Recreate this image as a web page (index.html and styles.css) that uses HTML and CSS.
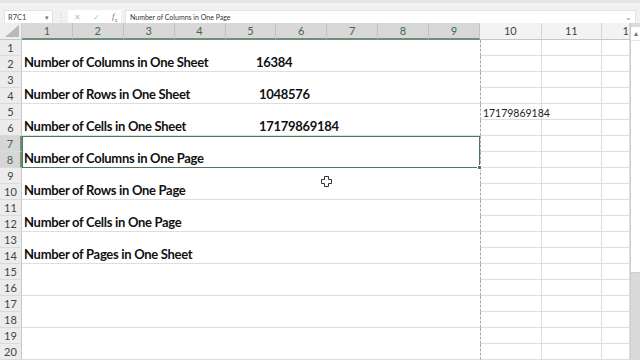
FILE: index.html
```html
<!DOCTYPE html>
<html lang="en">
<head>
    <meta charset="UTF-8">
    <title>Sheet - Rows, Columns and Cells</title>
    <link rel="stylesheet" href="styles.css">
</head>
<body>
    <div class="app">
        <div class="formula-bar">
            <div class="name-box">R7C1<span class="caret">▾</span></div>
            <div class="grip">⋮</div>
            <div class="fx-buttons">
                <span class="fx-btn">✕</span>
                <span class="fx-btn">✓</span>
                <span class="fx-btn fx"><i>f</i><sub>x</sub></span>
            </div>
            <div class="formula-input">Number of Columns in One Page<span class="chev">⌄</span></div>
        </div>

        <div class="sheet">
            <div class="grid">
                <div class="corner">
                    <svg width="14" height="12" viewBox="0 0 14 12"><polygon points="14,0 14,12 0,12" fill="#b9b9b9"/></svg>
                </div>
                <div class="col-head sel">1</div>
                <div class="col-head sel">2</div>
                <div class="col-head sel">3</div>
                <div class="col-head sel">4</div>
                <div class="col-head sel">5</div>
                <div class="col-head sel">6</div>
                <div class="col-head sel">7</div>
                <div class="col-head sel">8</div>
                <div class="col-head sel">9</div>
                <div class="col-head">10</div>
                <div class="col-head">11</div>
                <div class="col-head cut">1</div>

                <!-- rows 1-2 -->
                <div class="row-head">1</div>
                <div class="merged"><span class="label">Number of Columns in One Sheet</span><span class="value">16384</span></div>
                <div class="cell c10"></div><div class="cell"></div><div class="cell"></div>
                <div class="row-head">2</div>
                <div class="cell c10"></div><div class="cell"></div><div class="cell"></div>

                <!-- rows 3-4 -->
                <div class="row-head">3</div>
                <div class="merged"><span class="label">Number of Rows in One Sheet</span><span class="value shift">1048576</span></div>
                <div class="cell c10"></div><div class="cell"></div><div class="cell"></div>
                <div class="row-head">4</div>
                <div class="cell c10"></div><div class="cell"></div><div class="cell"></div>

                <!-- rows 5-6 -->
                <div class="row-head">5</div>
                <div class="merged"><span class="label">Number of Cells in One Sheet</span><span class="value shift">17179869184</span></div>
                <div class="cell c10 num">17179869184</div><div class="cell"></div><div class="cell"></div>
                <div class="row-head">6</div>
                <div class="cell c10"></div><div class="cell"></div><div class="cell"></div>

                <!-- rows 7-8 (selected) -->
                <div class="row-head sel">7</div>
                <div class="merged active"><span class="label">Number of Columns in One Page</span><span class="handle"></span></div>
                <div class="cell c10"></div><div class="cell"></div><div class="cell"></div>
                <div class="row-head sel">8</div>
                <div class="cell c10"></div><div class="cell"></div><div class="cell"></div>

                <!-- rows 9-10 -->
                <div class="row-head">9</div>
                <div class="merged"><span class="label">Number of Rows in One Page</span></div>
                <div class="cell c10"></div><div class="cell"></div><div class="cell"></div>
                <div class="row-head">10</div>
                <div class="cell c10"></div><div class="cell"></div><div class="cell"></div>

                <!-- rows 11-12 -->
                <div class="row-head">11</div>
                <div class="merged"><span class="label">Number of Cells in One Page</span></div>
                <div class="cell c10"></div><div class="cell"></div><div class="cell"></div>
                <div class="row-head">12</div>
                <div class="cell c10"></div><div class="cell"></div><div class="cell"></div>

                <!-- rows 13-14 -->
                <div class="row-head">13</div>
                <div class="merged"><span class="label">Number of Pages in One Sheet</span></div>
                <div class="cell c10"></div><div class="cell"></div><div class="cell"></div>
                <div class="row-head">14</div>
                <div class="cell c10"></div><div class="cell"></div><div class="cell"></div>

                <!-- rows 15-20 -->
                <div class="row-head">15</div>
                <div class="merged"></div>
                <div class="cell c10"></div><div class="cell"></div><div class="cell"></div>
                <div class="row-head">16</div>
                <div class="cell c10"></div><div class="cell"></div><div class="cell"></div>
                <div class="row-head">17</div>
                <div class="merged"></div>
                <div class="cell c10"></div><div class="cell"></div><div class="cell"></div>
                <div class="row-head">18</div>
                <div class="cell c10"></div><div class="cell"></div><div class="cell"></div>
                <div class="row-head">19</div>
                <div class="merged"></div>
                <div class="cell c10"></div><div class="cell"></div><div class="cell"></div>
                <div class="row-head">20</div>
                <div class="cell c10"></div><div class="cell"></div><div class="cell"></div>

                <!-- mouse pointer -->
                <svg class="pointer" width="11" height="11" viewBox="0 0 11 11">
                    <path d="M3.5 0.5h4v3h3v4h-3v3h-4v-3h-3v-4h3z" fill="#fff" stroke="#333" stroke-width="1"/>
                </svg>
            </div>

            <div class="scrollbar">
                <div class="arrow">▴</div>
                <div class="thumb"></div>
            </div>
        </div>
    </div>
</body>
</html>
```

FILE: styles.css
```css
* {
    box-sizing: border-box;
}

body {
    margin: 0;
    width: 640px;
    height: 360px;
    overflow: hidden;
    background: #fff;
    font-family: 'Lato', 'Liberation Sans', sans-serif;
}

.app {
    display: flex;
    flex-direction: column;
    height: 360px;
}

/* Formula bar */
.formula-bar {
    height: 23px;
    display: flex;
    align-items: flex-start;
    padding-top: 7px;
    background: #f1f1f1;
    border-top: 3px solid #e4e4e4;
    font-size: 7.5px;
    color: #444;
}

.name-box {
    width: 49px;
    height: 14px;
    margin-left: 4px;
    background: #fff;
    display: flex;
    align-items: center;
    justify-content: space-between;
    padding: 0 3px;
    border: 1px solid #e3e3e3;
}

.caret {
    font-size: 7px;
    color: #777;
}

.grip {
    width: 15px;
    text-align: center;
    color: #c4c4c4;
    font-size: 10px;
    line-height: 14px;
}

.fx-buttons {
    width: 53px;
    height: 14px;
    background: #fff;
    display: flex;
    align-items: center;
    gap: 12px;
    padding: 0 0 0 6px;
    color: #c0c0c0;
    font-size: 8px;
}

.fx-btn.fx {
    color: #777;
    font-family: 'Liberation Serif', serif;
    font-size: 9px;
}

.fx sub {
    font-size: 6px;
}

.formula-input {
    flex: 1;
    height: 14px;
    margin: 0 4px 0 4px;
    background: #fff;
    border: 1px solid #e3e3e3;
    display: flex;
    align-items: center;
    justify-content: space-between;
    padding: 0 3px 0 4px;
    color: #333;
    font-size: 7px;
}

.chev {
    color: #888;
    font-size: 8px;
    line-height: 6px;
}

/* Sheet */
.sheet {
    display: flex;
    flex: 1;
}

.grid {
    position: relative;
    width: 630px;
    display: grid;
    grid-template-columns: 22px repeat(9, 50.89px) 62px 60px 28px;
    grid-template-rows: 17px repeat(20, 16px);
    overflow: hidden;
}

.corner {
    background: #eeeeee;
    border-right: 1px solid #d0d0d0;
    border-bottom: 1px solid #c6c6c6;
    display: flex;
    align-items: flex-end;
    justify-content: flex-end;
    padding: 0 2px 2px 0;
}

.col-head {
    background: #f3f3f3;
    border-right: 1px solid #d4d4d4;
    border-bottom: 1px solid #c6c6c6;
    font-size: 11px;
    color: #444;
    text-align: center;
    line-height: 16px;
}

.col-head.sel {
    background: #d8d8d8;
    color: #3f6b4d;
    border-right-color: #c2c2c2;
    border-bottom: 2px solid #6d9178;
}

.col-head.cut {
    text-align: right;
    padding-right: 0;
}

.row-head {
    background: #ececec;
    border-right: 1px solid #c8c8c8;
    border-bottom: 1px solid #dadada;
    font-size: 11px;
    color: #444;
    text-align: center;
    line-height: 16px;
}

.row-head.sel {
    background: #d6d6d6;
    color: #3f6b4d;
    border-right: 2px solid #6d9178;
}

.merged {
    grid-column: span 9;
    grid-row: span 2;
    border-bottom: 1px solid #dedede;
    display: flex;
    align-items: flex-end;
    padding: 0 0 1px 2px;
    font-weight: 700;
    font-size: 13px;
    letter-spacing: -0.3px;
    color: #111;
    position: relative;
}

.label {
    width: 232px;
    flex: none;
}

.value.shift {
    margin-left: 3px;
}

.merged.active {
    border: 1.5px solid #4d7a5c;
    padding-left: 1px;
}

.handle {
    position: absolute;
    right: -3px;
    bottom: -3px;
    width: 5px;
    height: 5px;
    background: #4d7a5c;
    border: 1px solid #fff;
}

.cell {
    border-right: 1px solid #dedede;
    border-bottom: 1px solid #dedede;
}

.cell.c10 {
    border-left: 1px dashed #a9a9a9;
}

.cell.num {
    font-size: 10.5px;
    color: #222;
    padding: 3px 0 0 2px;
    line-height: 12px;
    white-space: nowrap;
}

.pointer {
    position: absolute;
    left: 321px;
    top: 153px;
}

/* Scrollbar */
.scrollbar {
    width: 10px;
    background: #dadada;
    border-left: 1px solid #cfcfcf;
    display: flex;
    flex-direction: column;
}

.arrow {
    height: 13px;
    background: #fff;
    font-size: 8px;
    color: #777;
    text-align: center;
    line-height: 12px;
    margin-top: 4px;
}

.thumb {
    height: 233px;
    background: #fff;
    border-top: 1px solid #e6e6e6;
    border-bottom: 1px solid #cfcfcf;
}
```
